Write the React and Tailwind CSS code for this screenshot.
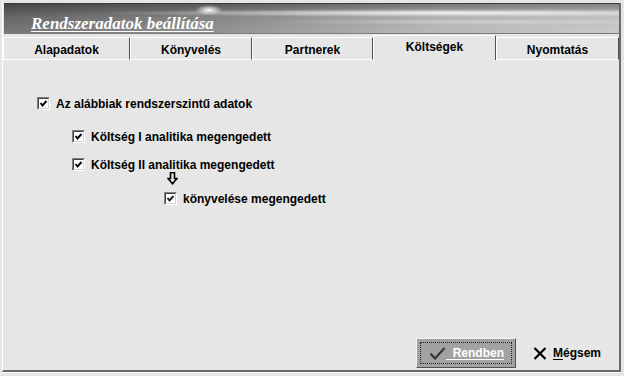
import React from "react";

function CheckBox({ dim }) {
  return (
    <span className="w-[13px] h-[13px] shrink-0 bg-white border border-t-[#808080] border-l-[#808080] border-r-white border-b-white">
      <span className="block w-full h-full border border-t-[#404040] border-l-[#404040] border-r-[#d4d4d4] border-b-[#d4d4d4]">
        <svg width="9" height="9" viewBox="0 0 9 9" className="block">
          <polyline
            points="1.5,4 3.5,6.5 7.5,2"
            fill="none"
            stroke={dim ? "#202020" : "#000"}
            strokeWidth="1.9"
          />
        </svg>
      </span>
    </span>
  );
}

function CheckRow({ label, indent, dim }) {
  return (
    <div className={`flex items-center gap-[6px] h-[13px] ${indent}`}>
      <CheckBox dim={dim} />
      <span className="text-[12px] font-bold text-black leading-none whitespace-nowrap">
        {label}
      </span>
    </div>
  );
}

const tabs = [
  { name: "Alapadatok", w: "w-[127px]" },
  { name: "Könyvelés", w: "w-[122px]" },
  { name: "Partnerek", w: "w-[121px]" },
  { name: "Költségek", w: "w-[123px]", active: true },
  { name: "Nyomtatás", w: "flex-1" },
];

export default function App() {
  return (
    <div
      className="w-[624px] h-[376px] bg-[#e6e6e6] pl-[2px] pr-[3px] pt-[3px] pb-[4px] flex overflow-hidden"
      style={{ fontFamily: '"Liberation Sans", Arial, sans-serif' }}
    >
      <div className="flex-1 flex flex-col border-l border-l-white border-r-2 border-r-[#6a6a6a] border-b-2 border-b-[#6a6a6a] shadow-[0_1px_0_#ffffff]">
        {/* title banner */}
        <div className="ml-[1px] h-[31px] border-t border-t-[#3c3c3c] border-b border-b-[#7a7a7a] pl-[27px] pt-[8px] bg-[radial-gradient(14px_5px_at_205px_6px,#ffffff,transparent),radial-gradient(360px_4px_at_450px_9px,rgba(255,255,255,0.9),transparent),radial-gradient(220px_3px_at_470px_18px,rgba(255,255,255,0.35),transparent),linear-gradient(to_bottom,rgba(0,0,0,0.32),transparent_45%,rgba(255,255,255,0.12)),linear-gradient(90deg,#666666,#868686_35%,#b0b0b0_70%,#c2c2c2)]">
          <span
            className="text-[17px] leading-[17px] font-bold italic text-white underline underline-offset-2 whitespace-nowrap"
            style={{ fontFamily: '"Liberation Serif", "Times New Roman", serif' }}
          >
            Rendszeradatok beállítása
          </span>
        </div>

        {/* tabs */}
        <div className="flex items-end h-[25px] mt-[1px]">
          {tabs.map((t) =>
            t.active ? (
              <div
                key={t.name}
                className={`${t.w} h-[25px] flex items-center justify-center pb-[2px] border-t border-t-white border-l border-l-white border-r border-r-[#505050] text-[12px] font-bold text-black`}
              >
                {t.name}
              </div>
            ) : (
              <div
                key={t.name}
                className={`${t.w} h-[23px] flex items-center justify-center pt-[3px] border-t border-t-white border-l border-l-white border-r border-r-[#505050] border-b border-b-white text-[12px] font-bold text-black`}
              >
                {t.name}
              </div>
            )
          )}
        </div>

        {/* content */}
        <div className="flex-1 flex flex-col">
          <div className="mt-[37px]">
            <CheckRow label="Az alábbiak rendszerszintű adatok" indent="ml-[34px]" />
          </div>
          <div className="mt-[20px]">
            <CheckRow label="Költség I analitika megengedett" indent="ml-[69px]" />
          </div>
          <div className="mt-[15px]">
            <CheckRow label="Költség II analitika megengedett" indent="ml-[69px]" />
          </div>
          <div className="mt-[1px] ml-[164px] h-[13px]">
            <svg width="11" height="13" viewBox="0 0 11 13" className="block">
              <polygon
                points="3.5,0.8 7.5,0.8 7.5,6.5 10,6.5 5.5,11.8 1,6.5 3.5,6.5"
                fill="none"
                stroke="#000"
                strokeWidth="1.6"
                strokeLinejoin="miter"
              />
            </svg>
          </div>
          <div className="mt-[7px]">
            <CheckRow label="könyvelése megengedett" indent="ml-[161px]" dim />
          </div>

          {/* buttons */}
          <div className="mt-auto flex items-center justify-end pr-[18px] pb-[2px]">
            <button className="w-[100px] h-[30px] p-[3px] bg-[#a2a2a2] border border-t-[#f4f4f4] border-l-[#f4f4f4] border-r-[#505050] border-b-[#505050]">
              <div className="w-full h-full flex items-center pl-[8px] border border-dotted border-[#202020]">
                <svg width="17" height="13" viewBox="0 0 17 13" className="block shrink-0">
                  <polyline
                    points="1.5,6.5 6,11.5 15.5,1"
                    fill="none"
                    stroke="#383838"
                    strokeWidth="2.2"
                  />
                </svg>
                <span className="text-[12px] font-bold text-white underline underline-offset-2 whitespace-pre leading-none">
                  {"  Rendben"}
                </span>
              </div>
            </button>
            <div className="ml-[17px] flex items-center gap-[6px]">
              <svg width="14" height="13" viewBox="0 0 14 13" className="block">
                <path d="M1.5 1 L12.5 12 M12.5 1 L1.5 12" stroke="#000" strokeWidth="2.2" />
              </svg>
              <span className="text-[12px] font-bold text-black leading-none">
                <span className="underline underline-offset-2">M</span>égsem
              </span>
            </div>
          </div>
        </div>
      </div>
    </div>
  );
}
